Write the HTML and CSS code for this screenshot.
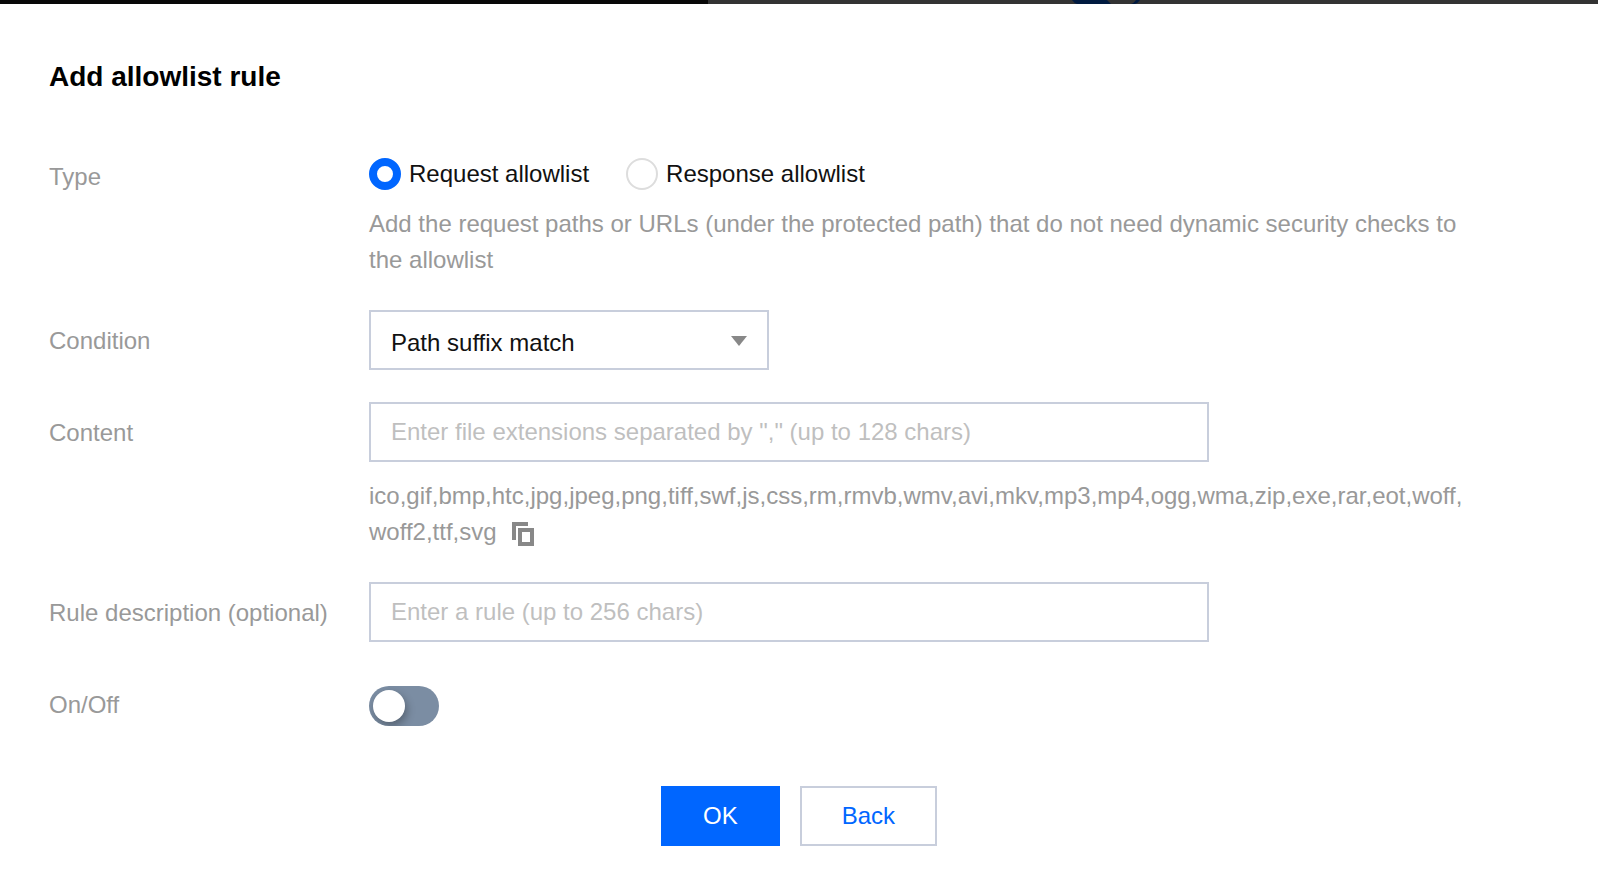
FILE: index.html
```html
<!DOCTYPE html>
<html lang="en">
<head>
<meta charset="utf-8">
<meta name="viewport" content="width=device-width, initial-scale=1">
<title>Add allowlist rule</title>
<link rel="stylesheet" href="styles.css">
</head>
<body>
<div class="backdrop" aria-hidden="true">
  <div class="backdrop-nav"></div>
  <div class="backdrop-page">
    <svg class="backdrop-art" width="68" height="4" viewBox="0 0 68 4">
      <path d="M0 0H35L39 4H5Q2 3 0 0Z" fill="#001a40"/>
      <path d="M64 0H68Q66 3 63 4H59Q62 3 64 0Z" fill="#001a40"/>
    </svg>
  </div>
</div>
<main class="dialog">
  <h1 class="title">Add allowlist rule</h1>
  <form class="form">
    <div class="row" role="radiogroup" aria-labelledby="type-label">
      <span class="label" id="type-label">Type</span>
      <div class="control">
        <div class="radios">
          <label class="radio"><input type="radio" name="type" checked>Request allowlist</label>
          <label class="radio"><input type="radio" name="type">Response allowlist</label>
        </div>
        <p class="help help-tight">Add the request paths or URLs (under the protected path) that do not need dynamic security checks to the allowlist</p>
      </div>
    </div>
    <div class="row">
      <label class="label" for="condition">Condition</label>
      <div class="control">
        <div class="select">
          <select id="condition"><option>Path suffix match</option></select>
          <svg class="arrow" width="16" height="10" viewBox="0 0 16 10" aria-hidden="true"><path d="M0 0H16L8 10Z" fill="#888"/></svg>
        </div>
      </div>
    </div>
    <div class="row">
      <label class="label" for="content">Content</label>
      <div class="control">
        <input class="text" id="content" type="text" placeholder='Enter file extensions separated by "," (up to 128 chars)'>
        <p class="help">ico,<wbr>gif,<wbr>bmp,<wbr>htc,<wbr>jpg,<wbr>jpeg,<wbr>png,<wbr>tiff,<wbr>swf,<wbr>js,<wbr>css,<wbr>rm,<wbr>rmvb,<wbr>wmv,<wbr>avi,<wbr>mkv,<wbr>mp3,<wbr>mp4,<wbr>ogg,<wbr>wma,<wbr>zip,<wbr>exe,<wbr>rar,<wbr>eot,<wbr>woff,<wbr>woff2,<wbr>ttf,<wbr>svg<button class="copy" type="button" aria-label="Copy"><svg width="22" height="24" viewBox="0 0 22 24"><path d="M0 0H16V4H4V18H0ZM6 6H22V24H6ZM10 10V20H18V10Z" fill="#888" fill-rule="evenodd"/></svg></button></p>
      </div>
    </div>
    <div class="row">
      <label class="label" for="description">Rule description (optional)</label>
      <div class="control">
        <input class="text" id="description" type="text" placeholder="Enter a rule (up to 256 chars)">
      </div>
    </div>
    <div class="row">
      <label class="label" for="enabled">On/Off</label>
      <div class="control">
        <input class="switch" id="enabled" type="checkbox" role="switch">
      </div>
    </div>
    <div class="actions">
      <button class="button primary" type="submit">OK</button>
      <button class="button" type="button">Back</button>
    </div>
  </form>
</main>
</body>
</html>
```
FILE: styles.css
```css
* {
  box-sizing: border-box;
}

body {
  margin: 0;
  background: #fff;
  color: #111;
  font: 24px/36px "Liberation Sans", Arial, sans-serif;
}

input,
select,
button {
  margin: 0;
  font: inherit;
}

.backdrop {
  display: flex;
  height: 4px;
  background: #333;
}

.backdrop-nav {
  flex: 354;
  background: #080808;
}

.backdrop-page {
  display: flex;
  flex: 445;
  justify-content: center;
}

.backdrop-art {
  margin-right: 94px;
}

.dialog {
  padding: 55px 49px 46px;
}

.title {
  margin: 0 0 51px;
  color: #000;
  font-size: 28px;
  line-height: 36px;
}

.form {
  display: flex;
  flex-direction: column;
  gap: 32px;
}

.row {
  display: grid;
  grid-template-columns: 320px minmax(0, 1fr);
}

.label {
  padding-top: 13px;
  color: #999;
}

.radios {
  display: flex;
  align-items: center;
  gap: 37px;
  height: 56px;
}

.radio {
  display: flex;
  align-items: center;
  gap: 8px;
}

.radio input {
  width: 32px;
  height: 32px;
  appearance: none;
  border: 2px solid #ddd;
  border-radius: 50%;
  background: #fff;
}

.radio input:checked {
  border: 8px solid #06f;
}

.help {
  margin: 16px 0 0;
  padding-right: 64px;
  color: #999;
}

.help-tight {
  margin-top: 4px;
}

.select {
  position: relative;
  max-width: 400px;
}

.select select,
.text {
  display: block;
  width: 100%;
  height: 60px;
  padding: 0 20px;
  border: 2px solid #c8cedc;
  border-radius: 0;
  background: #fff;
  color: #111;
}

.select select {
  padding-top: 5px;
  appearance: none;
}

.arrow {
  position: absolute;
  top: 26px;
  right: 22px;
  pointer-events: none;
}

.text {
  max-width: 840px;
}

.text::placeholder {
  color: #bfbfbf;
  opacity: 1;
}

.copy {
  margin-left: 15px;
  padding: 0;
  border: 0;
  background: none;
  line-height: 0;
  vertical-align: -6px;
}

.control .switch {
  display: block;
  width: 70px;
  height: 40px;
  margin-top: 12px;
  padding: 4px;
  appearance: none;
  border-radius: 20px;
  background: #7b8da3;
  overflow: hidden;
}

.switch::before {
  display: block;
  width: 32px;
  height: 32px;
  border-radius: 50%;
  background: #fff;
  box-shadow: 2px 4px 8px rgba(0, 0, 0, 0.3);
  content: "";
}

.switch:checked {
  background: #06f;
}

.switch:checked::before {
  margin-left: 30px;
}

.actions {
  display: flex;
  justify-content: center;
  gap: 20px;
  padding-top: 28px;
}

.button {
  height: 60px;
  padding: 0 40px;
  border: 2px solid #c8cedc;
  background: #fff;
  color: #06f;
}

.primary {
  border-color: #06f;
  background: #06f;
  color: #fff;
}
```
